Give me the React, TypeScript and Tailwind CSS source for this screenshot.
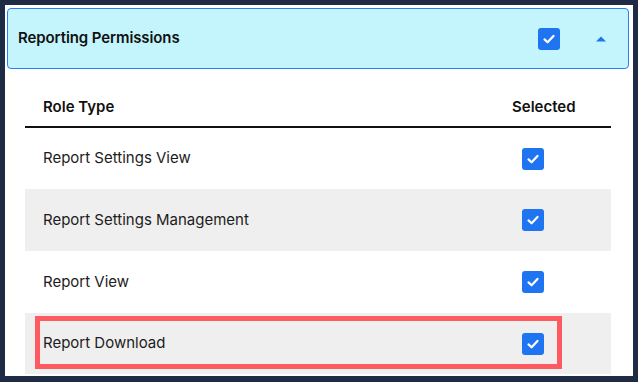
import React from "react";

function Check() {
  return (
    <div className="w-[22px] h-[22px] rounded-[3px] bg-[#1f74f1] flex items-center justify-center">
      <svg width="14" height="14" viewBox="0 0 14 14" fill="none">
        <path d="M2.5 7.4 L5.6 10.3 L11.5 3.9" stroke="white" strokeWidth="2.2" strokeLinecap="round" strokeLinejoin="round" />
      </svg>
    </div>
  );
}

const rows = [
  { label: "Report Settings View", gray: false, h: "h-[61px]" },
  { label: "Report Settings Management", gray: true, h: "h-[62px]" },
  { label: "Report View", gray: false, h: "h-[62px]" },
  { label: "Report Download", gray: true, h: "h-[61px]", highlight: true },
];

export default function App() {
  return (
    <div
      className="w-[638px] h-[382px] bg-[#1f2a44] pt-[5px] pl-[5px] pr-[5px] pb-[6px] overflow-hidden"
      style={{ fontFamily: "Inter, 'Noto Sans', sans-serif" }}
    >
      <div className="bg-white h-full pl-[2px] pt-[3px] pr-[4px] overflow-hidden">
        <div className="h-[61px] border border-[#2b7ff5] bg-[#c4f5fd] rounded-[4px] flex items-center pl-[10px] pr-[22px]">
          <div className="flex-1 text-[15px] font-semibold text-[#111] tracking-[-0.1px]">Reporting Permissions</div>
          <Check />
          <svg className="ml-[36px]" width="10" height="6" viewBox="0 0 10 6">
            <path d="M0 5.5 L5 0.5 L10 5.5 Z" fill="#1f74f1" />
          </svg>
        </div>
        <div className="ml-[18px] w-[586px] mt-[19px]">
          <div className="h-[40px] flex items-center border-b-2 border-[#111]">
            <div className="flex-1 pl-[18px] text-[15px] font-semibold text-[#111]">Role Type</div>
            <div className="w-[99px] text-[15px] font-semibold text-[#111]">Selected</div>
          </div>
          {rows.map((r) => (
            <div
              key={r.label}
              className={`relative ${r.h} flex items-center ${r.gray ? "bg-[#efefef]" : "bg-white"}`}
            >
              <div className="flex-1 pl-[18px] text-[15px] text-[#1c1c1c]">{r.label}</div>
              <div className="w-[99px] pl-[10px]">
                <Check />
              </div>
              {r.highlight && (
                <div className="absolute left-[10px] top-[3px] w-[527px] h-[53px] border-[5px] border-[#ff5a60]" />
              )}
            </div>
          ))}
        </div>
      </div>
    </div>
  );
}
